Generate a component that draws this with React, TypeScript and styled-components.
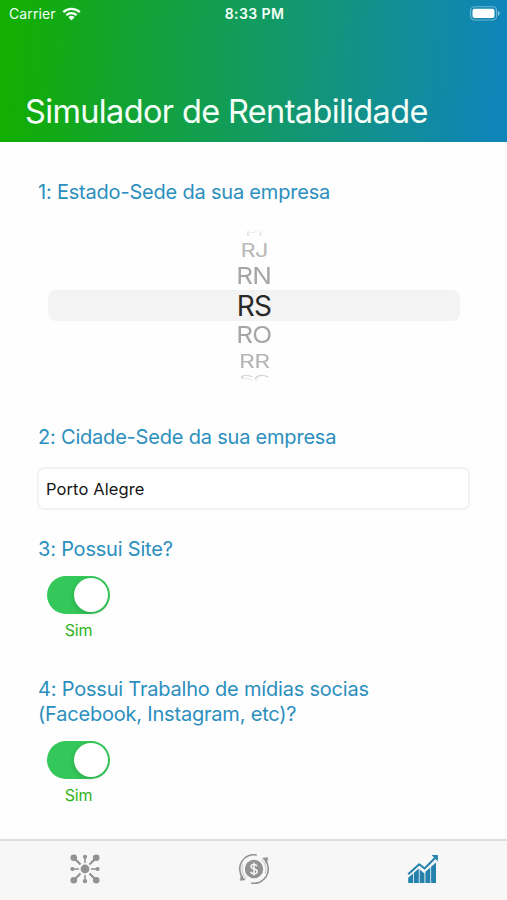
import React, { useState } from "react";
import styled, { createGlobalStyle } from "styled-components";

const GlobalStyle = createGlobalStyle`
  *, *::before, *::after { box-sizing: border-box; }
  body { margin: 0; background: #fff; font-family: Inter, "Liberation Sans", sans-serif; }
`;

const Screen = styled.div`
  width: 507px;
  height: 900px;
  display: flex;
  flex-direction: column;
  overflow: hidden;
  background: #fefefe;
`;

const Header = styled.header`
  height: 142px;
  flex: none;
  display: flex;
  flex-direction: column;
  justify-content: space-between;
  color: #f4fff8;
  background: linear-gradient(94deg, #12ae02 3%, #12a432 25%, #129b60 50%, #128f91 75%, #0f85ba 98%);
`;

const StatusBar = styled.div`
  display: grid;
  grid-template-columns: 1fr auto 1fr;
  align-items: center;
  height: 27px;
  padding: 0 7px 0 9px;
`;

const Carrier = styled.div`
  display: flex;
  align-items: center;
  gap: 6px;
  font-size: 14px;
  letter-spacing: 0.1px;
`;

const Clock = styled.div`
  font-size: 14px;
  font-weight: 600;
  letter-spacing: 0.4px;
`;

const BatterySlot = styled.div`
  display: flex;
  justify-content: flex-end;
`;

const Title = styled.h1`
  margin: 0;
  padding: 0 0 9px 25px;
  font-size: 32.5px;
  line-height: 42px;
  font-weight: 400;
  letter-spacing: -0.64px;
  white-space: nowrap;
`;

const Form = styled.main`
  flex: 1;
  min-height: 0;
  padding: 38px 37px 0 38px;
  display: flex;
  flex-direction: column;
`;

const Field = styled.section<{ $height: number }>`
  height: ${(p) => p.$height}px;
  flex: none;
`;

const Question = styled.h2`
  margin: 0;
  font-size: 20px;
  line-height: 25px;
  font-weight: 400;
  letter-spacing: -0.2px;
  color: #2b8fbe;
  white-space: nowrap;
`;

const Wheel = styled.div`
  margin: 20px 10px 0 10px;
  display: flex;
  flex-direction: column;
`;

const WheelRow = styled.div<{ $height: number; $selected?: boolean }>`
  height: ${(p) => p.$height}px;
  display: flex;
  align-items: center;
  justify-content: center;
  border-radius: ${(p) => (p.$selected ? 8 : 0)}px;
  background: ${(p) => (p.$selected ? "#f3f3f3" : "transparent")};
`;

const WheelText = styled.span<{ $x: number; $y: number; $color: string; $shift: number; $fade?: string }>`
  flex: none;
  font-size: 28px;
  line-height: 30px;
  letter-spacing: -0.8px;
  color: ${(p) => p.$color};
  transform: translateY(${(p) => p.$shift}px) scale(${(p) => p.$x}, ${(p) => p.$y});
  mask-image: ${(p) => p.$fade ?? "none"};
`;

const CityInput = styled.input`
  display: block;
  width: 433px;
  height: 43px;
  margin: 17px 0 0 -1px;
  padding: 0 7px;
  border: 2px solid #f2f2f2;
  border-radius: 7px;
  outline: none;
  background: #fff;
  color: #161616;
  font: 400 16.5px Inter, "Liberation Sans", sans-serif;
  letter-spacing: 0.1px;
`;

const SwitchGroup = styled.div`
  width: 63px;
  margin: 14px 0 0 9px;
  display: flex;
  flex-direction: column;
  align-items: center;
`;

const Track = styled.button<{ $on: boolean }>`
  width: 63px;
  height: 38px;
  padding: 2px;
  display: flex;
  justify-content: ${(p) => (p.$on ? "flex-end" : "flex-start")};
  border: 0;
  border-radius: 19px;
  background: ${(p) => (p.$on ? "#34c759" : "#e9e9ea")};
`;

const Knob = styled.span`
  width: 34px;
  height: 34px;
  border-radius: 50%;
  background: #fff;
  box-shadow: -1px 2px 5px rgba(0, 0, 0, 0.12);
`;

const SwitchLabel = styled.span`
  margin-top: 6px;
  font-size: 16px;
  line-height: 20px;
  letter-spacing: -0.2px;
  color: #2fb31d;
`;

const TabBar = styled.nav`
  height: 61px;
  flex: none;
  display: grid;
  grid-template-columns: repeat(3, 1fr);
  border-top: 2px solid #dfdfdf;
  background: #f7f7f7;
`;

const Tab = styled.a<{ $active?: boolean }>`
  display: flex;
  align-items: center;
  justify-content: center;
  padding-bottom: 3px;
  color: ${(p) => (p.$active ? "#2482ad" : "#929292")};
`;

const WifiIcon = () => (
  <svg width="19" height="14" viewBox="0 0 19 14" fill="currentColor">
    <path d="M.4 4.3a13.2 13.2 0 0 1 18.2 0L16.9 6a10.7 10.7 0 0 0-14.8 0z" />
    <path d="M3.5 7.4a8.7 8.7 0 0 1 12 0l-1.7 1.7a6.2 6.2 0 0 0-8.6 0z" />
    <path d="M6.4 10.3a4.5 4.5 0 0 1 6.2 0L9.5 13.6z" />
  </svg>
);

const BatteryIcon = () => (
  <svg width="30" height="15" viewBox="0 0 30 15">
    <rect x=".6" y=".8" width="26" height="13.2" rx="4" fill="none" stroke="#fff" strokeOpacity=".4" strokeWidth="1.1" />
    <rect x="2.5" y="2.8" width="22" height="9.2" rx="2" fill="#fff" />
    <path d="M28 5v4.8c1.1-.4 1.7-1.3 1.7-2.4S29.1 5.4 28 5z" fill="#fff" fillOpacity=".5" />
  </svg>
);

const NetworkIcon = () => (
  <svg width="32" height="32" viewBox="0 0 32 32" fill="currentColor" stroke="currentColor">
    <circle cx="16" cy="16" r="4.4" stroke="none" />
    <path d="M6 6l5.5 5.5M26 6l-5.5 5.5M6 26l5.5-5.5M26 26l-5.5-5.5" strokeWidth="2.2" />
    <path d="M16 4v6M16 22v6M4 16h6M22 16h6" strokeWidth="1.5" />
    <g stroke="none">
      <circle cx="4.8" cy="4.8" r="3.3" />
      <circle cx="27.2" cy="4.8" r="3.3" />
      <circle cx="4.8" cy="27.2" r="3.3" />
      <circle cx="27.2" cy="27.2" r="3.3" />
      <circle cx="16" cy="3.8" r="2.1" />
      <circle cx="16" cy="28.2" r="2.1" />
      <circle cx="3.4" cy="16" r="2.1" />
      <circle cx="28.6" cy="16" r="2.1" />
    </g>
  </svg>
);

const MoneyIcon = () => (
  <svg width="32" height="32" viewBox="0 0 32 32" fill="none" stroke="currentColor">
    <circle cx="16" cy="16" r="9.2" fill="currentColor" stroke="none" />
    <path d="M18.8 2A14.2 14.2 0 0 0 4.6 24.5M13.2 30A14.2 14.2 0 0 0 27.4 7.5" strokeWidth="1.6" />
    <path d="M8.5 25.2A12 12 0 0 1 4.8 11.5M23.5 6.8a12 12 0 0 1 3.7 13.7" strokeWidth=".5" />
    <path d="M24.6 5.2l5.2-.6-.8 5.2zM7.4 26.8l-5.2.6.8-5.2z" fill="currentColor" strokeWidth=".5" />
    <path d="M19 13.2c-.4-1.2-1.5-1.8-3-1.8-1.8 0-3 .9-3 2.2 0 3.3 6.2 1.5 6.2 4.8 0 1.4-1.3 2.3-3.2 2.3-1.7 0-2.9-.7-3.3-2M16 9.5v13" stroke="#f7f7f7" strokeWidth="1.5" />
  </svg>
);

const GrowthIcon = () => (
  <svg width="32" height="30" viewBox="0 0 32 30" fill="currentColor">
    <path d="M1.2 23.8l4.9-4.3V29H1.2zM6.9 18.8l4.9-4.3V29H6.9zM12.6 15.6l4.9 4V29h-4.9zM18.4 17.8l4.9-4.3V29h-4.9zM24.1 12.7l4.9-4.3V29h-4.9z" />
    <path d="M1.2 20.2L12.2 10.2l5.4 4.3L28 4" fill="none" stroke="currentColor" strokeWidth="2" />
    <path d="M24.6 1.1h6.3v6.3z" />
  </svg>
);

const states = [
  { name: "PI", height: 14, x: 0.72, y: 0.38, color: "#e0e0e0", shift: 0, fade: "linear-gradient(transparent 25%, #000 75%)" },
  { name: "RJ", height: 23, x: 0.84, y: 0.68, color: "#b9b9b9", shift: -1 },
  { name: "RN", height: 28, x: 0.93, y: 0.84, color: "#a6a6a6", shift: 0 },
  { name: "RS", height: 31, x: 1, y: 1, color: "#292929", shift: 0, selected: true },
  { name: "RO", height: 28, x: 0.93, y: 0.84, color: "#a6a6a6", shift: 0 },
  { name: "RR", height: 24, x: 0.88, y: 0.68, color: "#b6b6b6", shift: 0 },
  { name: "SC", height: 14, x: 0.84, y: 0.38, color: "#d4d4d4", shift: -1, fade: "linear-gradient(#000 30%, transparent 75%)" },
];

function YesNoSwitch({ label }: { label: string }) {
  const [on, setOn] = useState(true);
  return (
    <SwitchGroup>
      <Track type="button" role="switch" aria-checked={on} aria-label={label} $on={on} onClick={() => setOn(!on)}>
        <Knob />
      </Track>
      <SwitchLabel>{on ? "Sim" : "Não"}</SwitchLabel>
    </SwitchGroup>
  );
}

export default function App() {
  return (
    <>
      <GlobalStyle />
      <Screen>
        <Header>
          <StatusBar>
            <Carrier>
              Carrier
              <WifiIcon />
            </Carrier>
            <Clock>8:33 PM</Clock>
            <BatterySlot>
              <BatteryIcon />
            </BatterySlot>
          </StatusBar>
          <Title>Simulador de Rentabilidade</Title>
        </Header>
        <Form>
          <Field $height={245}>
            <Question>1: Estado-Sede da sua empresa</Question>
            <Wheel>
              {states.map((s) => (
                <WheelRow key={s.name} $height={s.height} $selected={s.selected}>
                  <WheelText $x={s.x} $y={s.y} $color={s.color} $shift={s.shift} $fade={s.fade}>
                    {s.name}
                  </WheelText>
                </WheelRow>
              ))}
            </Wheel>
          </Field>
          <Field $height={112}>
            <Question>2: Cidade-Sede da sua empresa</Question>
            <CityInput defaultValue="Porto Alegre" aria-label="Cidade" />
          </Field>
          <Field $height={140}>
            <Question>3: Possui Site?</Question>
            <YesNoSwitch label="Possui Site" />
          </Field>
          <Field $height={150}>
            <Question>
              4: Possui Trabalho de mídias socias
              <br />
              (Facebook, Instagram, etc)?
            </Question>
            <YesNoSwitch label="Possui Trabalho de mídias socias" />
          </Field>
        </Form>
        <TabBar>
          <Tab aria-label="Rede">
            <NetworkIcon />
          </Tab>
          <Tab aria-label="Finanças">
            <MoneyIcon />
          </Tab>
          <Tab aria-label="Simulador" $active>
            <GrowthIcon />
          </Tab>
        </TabBar>
      </Screen>
    </>
  );
}
